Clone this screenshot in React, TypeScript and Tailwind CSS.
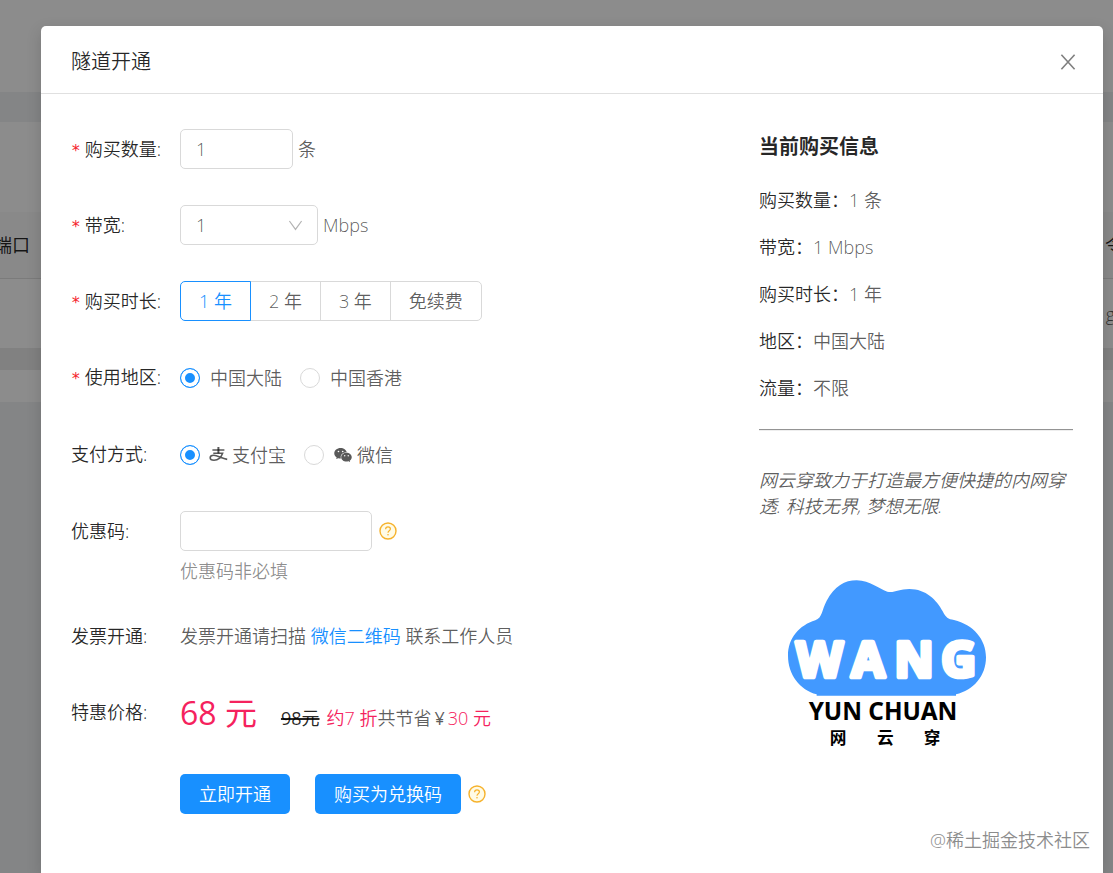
import React, { useState } from "react";
import { AiFillWechat } from "react-icons/ai";

const durations = ["1 年", "2 年", "3 年", "免续费"];
const regions = ["中国大陆", "中国香港"];

const radioClass =
  "size-5 shrink-0 appearance-none rounded-full border border-[#d9d9d9] bg-white checked:border-[#1890ff] checked:bg-[#1890ff] checked:shadow-[inset_0_0_0_4px_#fff]";

function FormRow({
  label,
  htmlFor,
  required,
  children,
}: {
  label?: string;
  htmlFor?: string;
  required?: boolean;
  children: React.ReactNode;
}) {
  return (
    <div className="flex items-start">
      <div className="flex h-10 w-[109px] shrink-0 items-center text-black/85">
        {required && (
          <span className="mr-1 pt-1 font-[DejaVu_Sans_Mono,monospace] text-base text-[#f5222d]">*</span>
        )}
        {label && <label htmlFor={htmlFor}>{label}:</label>}
      </div>
      {children}
    </div>
  );
}

function HelpIcon() {
  return (
    <button type="button" aria-label="帮助" className="ml-[7px]">
      <svg viewBox="0 0 18 18" className="size-[18px]" fill="none" stroke="#f6b22c">
        <circle cx="9" cy="9" r="8" fill="#fffbe6" strokeWidth="1.4" />
        <path d="M6.6 7.2C6.6 5.7 7.6 4.9 9 4.9S11.4 5.8 11.4 7.1C11.4 8.8 9 8.8 9 10.7" strokeWidth="1.2" />
        <circle cx="9" cy="12.7" r="0.8" fill="#f6b22c" stroke="none" />
      </svg>
    </button>
  );
}

function AlipayIcon() {
  return (
    <svg viewBox="0 0 19 19" className="mr-1 ml-[9px] size-[19px]" fill="none" stroke="currentColor">
      <path d="M3.4 5H15.4" strokeWidth="1.5" />
      <path d="M9.4 2V8.3" strokeWidth="2" />
      <path d="M4.3 8.3H13.6C12.4 11.8 9.2 15.2 5 15.2C2.6 15.2 1.2 14.2 1.2 12.8C1.2 11.2 2.8 10.3 4.8 10.3C8.6 10.3 12.6 13.6 18.2 14.4" strokeWidth="1.6" />
    </svg>
  );
}

function BackgroundPage() {
  return (
    <div className="absolute inset-0 bg-[#f0f2f5] text-lg" aria-hidden="true">
      <div className="h-[92px] bg-white" />
      <div className="mt-[30px] h-[90px] bg-white" />
      <div className="flex h-[67px] items-center justify-between overflow-hidden border-b border-[#e0e0e0] bg-[#fafafa] font-normal text-black/85">
        <span className="-ml-1.5">端口</span>
        <span className="-mr-2.5">令</span>
      </div>
      <div className="flex h-[69px] items-center justify-end overflow-hidden bg-white text-black/65">
        <span className="-mr-0.5">g</span>
      </div>
      <div className="h-[22px] bg-[#ebebeb]" />
      <div className="h-8 bg-white" />
    </div>
  );
}

function Logo() {
  return (
    <svg viewBox="0 0 720 600" className="mt-[45px] ml-[11px] h-[200px] w-60" role="img" aria-label="网云穿">
      <path
        fill="#4299ff"
        d="M140 391C90 378 54 332 54 275C54 222 88 184 136 169C158 160 155 138 170 110C194 66 224 49 260 49C302 50 324 74 352 83C372 88 386 75 418 75C468 75 500 108 518 142C528 161 534 166 552 168C610 182 648 226 648 280C648 336 610 380 558 391V395H140Z"
      />
      <g
        fill="#fff"
        stroke="#fff"
        strokeWidth="14"
        strokeLinejoin="round"
        fontFamily="'Open Sans', sans-serif"
        fontWeight="700"
        fontSize="144"
        textAnchor="middle"
      >
        <text x="148" y="340">W</text>
        <text x="294" y="340">A</text>
        <text x="432" y="340">N</text>
        <text x="566" y="340">G</text>
      </g>
      <text x="339" y="468" textAnchor="middle" fontFamily="'Noto Sans', sans-serif" fontWeight="700" fontSize="73">
        YUN CHUAN
      </text>
      <g fontFamily="'Noto Sans CJK SC', sans-serif" fontWeight="700" fontSize="50" textAnchor="middle">
        <text x="204" y="540">网</text>
        <text x="346" y="540">云</text>
        <text x="486" y="540">穿</text>
      </g>
    </svg>
  );
}

export default function App() {
  const [count, setCount] = useState("1");
  const [bandwidth, setBandwidth] = useState("1");
  const [duration, setDuration] = useState("1 年");
  const [region, setRegion] = useState("中国大陆");

  const summary = [
    ["购买数量", `${count} 条`],
    ["带宽", `${bandwidth} Mbps`],
    ["购买时长", duration],
    ["地区", region],
    ["流量", "不限"],
  ];

  return (
    <div
      lang="zh-CN"
      className="relative flex min-h-screen flex-col overflow-hidden font-['Open_Sans','Noto_Sans_CJK_SC',sans-serif] text-lg font-[350] text-black/65"
    >
      <BackgroundPage />
      <div className="absolute inset-0 bg-black/45" />

      <div
        role="dialog"
        aria-labelledby="dialog-title"
        className="relative mt-[26px] mr-2.5 ml-[41px] flex-1 rounded-t-[5px] bg-white shadow-[0_5px_15px_rgba(0,0,0,0.15)]"
      >
        <header className="flex h-[68px] items-center justify-between border-b border-[#e0e0e0] pr-[26px] pl-[30px] pt-1">
          <h1 id="dialog-title" className="text-xl text-black/85">隧道开通</h1>
          <button type="button" aria-label="关闭" className="text-black/50">
            <svg viewBox="0 0 18 18" className="size-[18px]" fill="none" stroke="currentColor" strokeWidth="1.6">
              <path d="M2.4 1.8L15.6 16.2M15.6 1.8L2.4 16.2" />
            </svg>
          </button>
        </header>

        <div className="flex justify-between px-[30px]">
          <form className="flex flex-1 flex-col gap-9 pt-[35px]" onSubmit={(e) => e.preventDefault()}>
            <FormRow label="购买数量" htmlFor="count" required>
              <div className="flex items-center gap-[5px]">
                <input
                  id="count"
                  inputMode="numeric"
                  value={count}
                  onChange={(e) => setCount(e.target.value)}
                  className="h-10 w-[113px] rounded-[5px] border border-[#d9d9d9] px-[15px]"
                />
                <span>条</span>
              </div>
            </FormRow>

            <FormRow label="带宽" htmlFor="bandwidth" required>
              <div className="flex items-center gap-[5px]">
                <div className="grid items-center">
                  <select
                    id="bandwidth"
                    value={bandwidth}
                    onChange={(e) => setBandwidth(e.target.value)}
                    className="col-start-1 row-start-1 h-10 w-[138px] appearance-none rounded-[5px] border border-[#d9d9d9] bg-white px-[15px]"
                  >
                    <option>1</option>
                    <option>2</option>
                    <option>5</option>
                  </select>
                  <svg
                    viewBox="0 0 15 15"
                    className="pointer-events-none col-start-1 row-start-1 mr-[15px] size-[15px] justify-self-end text-black/30"
                    fill="none"
                    stroke="currentColor"
                    strokeWidth="1.2"
                  >
                    <path d="M1.4 3L7.5 11.4L13.6 3" />
                  </svg>
                </div>
                <span>Mbps</span>
              </div>
            </FormRow>

            <FormRow label="购买时长" required>
              <div className="flex" role="radiogroup" aria-label="购买时长">
                {durations.map((d) => (
                  <label
                    key={d}
                    className="relative -ml-px flex h-10 items-center border border-[#d9d9d9] px-[18px] first:ml-0 first:rounded-l-[5px] last:rounded-r-[5px] has-checked:z-10 has-checked:border-[#1890ff] has-checked:text-[#1890ff]"
                  >
                    <input
                      type="radio"
                      name="duration"
                      className="sr-only"
                      checked={duration === d}
                      onChange={() => setDuration(d)}
                    />
                    {d}
                  </label>
                ))}
              </div>
            </FormRow>

            <FormRow label="使用地区" required>
              <div className="flex h-[41px] items-center gap-[18px]" role="radiogroup" aria-label="使用地区">
                {regions.map((r) => (
                  <label key={r} className="flex items-center gap-2.5">
                    <input
                      type="radio"
                      name="region"
                      className={radioClass}
                      checked={region === r}
                      onChange={() => setRegion(r)}
                    />
                    {r}
                  </label>
                ))}
              </div>
            </FormRow>

            <FormRow label="支付方式">
              <div className="flex h-[41px] items-center gap-[18px]" role="radiogroup" aria-label="支付方式">
                <label className="flex items-center">
                  <input type="radio" name="pay" className={radioClass} defaultChecked />
                  <AlipayIcon />
                  支付宝
                </label>
                <label className="flex items-center">
                  <input type="radio" name="pay" className={radioClass} />
                  <AiFillWechat className="mr-1 ml-[9px] size-5" />
                  微信
                </label>
              </div>
            </FormRow>

            <FormRow label="优惠码" htmlFor="coupon">
              <div>
                <div className="flex items-center">
                  <input id="coupon" className="h-10 w-48 rounded-[5px] border border-[#d9d9d9] px-[15px]" />
                  <HelpIcon />
                </div>
                <p className="mt-[11px] leading-[18px] text-black/45">优惠码非必填</p>
              </div>
            </FormRow>

            <FormRow label="发票开通">
              <p className="leading-10">
                发票开通请扫描{" "}
                <a href="#wechat" className="text-[#1890ff]">微信二维码</a>{" "}
                联系工作人员
              </p>
            </FormRow>

            <FormRow label="特惠价格">
              <p className="flex h-[46px] items-baseline leading-[42px]">
                <span className="mr-6 text-[32px] font-normal text-[#f5225d]">68 元</span>
                <del className="mr-[7px] font-normal text-black/85 decoration-2">98元</del>
                <span className="text-[#f5225d]">约7 折</span>
                <span>共节省</span>
                <span className="mx-[3px] font-normal">¥</span>
                <span className="text-[#f5225d]">30 元</span>
              </p>
            </FormRow>

            <FormRow>
              <div className="flex items-center">
                <button type="submit" className="mr-[25px] h-10 rounded-[5px] bg-[#1890ff] px-[19px] text-white">
                  立即开通
                </button>
                <button type="button" className="h-10 rounded-[5px] bg-[#1890ff] px-[19px] text-white">
                  购买为兑换码
                </button>
                <HelpIcon />
              </div>
            </FormRow>
          </form>

          <aside className="w-[314px] shrink-0 pt-[38px]">
            <h2 className="text-xl leading-[30px] font-bold text-black/85">当前购买信息</h2>
            <dl className="mt-[15px] leading-[47px]">
              {summary.map(([name, value]) => (
                <div key={name} className="flex">
                  <dt className="text-black/85">{name}：</dt>
                  <dd>{value}</dd>
                </div>
              ))}
            </dl>
            <hr className="mt-[17px] h-0.5 border-t border-b border-t-[#949494] border-b-[#eeeeee]" />
            <p className="mt-9 leading-[26px] italic">
              网云穿致力于打造最方便快捷的内网穿透. 科技无界, 梦想无限.
            </p>
            <Logo />
          </aside>
        </div>
      </div>

      <span className="absolute right-[23px] bottom-5 leading-[26px] text-[#8c8c8c]">@稀土掘金技术社区</span>
    </div>
  );
}
